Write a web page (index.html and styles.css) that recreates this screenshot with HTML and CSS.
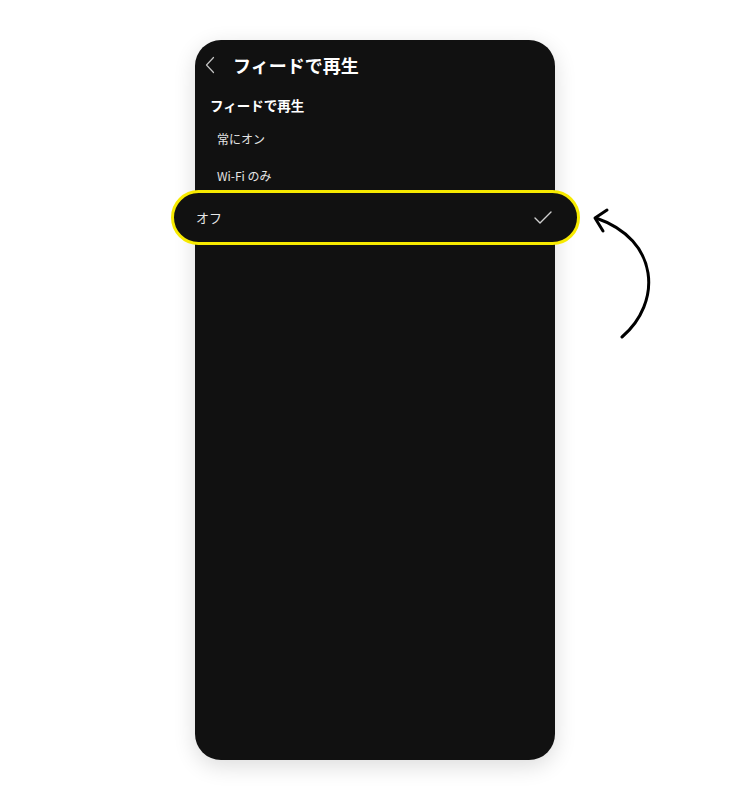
FILE: index.html
```html
<!DOCTYPE html>
<html lang="ja">
<head>
<meta charset="utf-8">
<link rel="stylesheet" href="styles.css">
</head>
<body>
<div class="stage">
  <div class="phone">
    <div class="header">
      <svg class="back" width="12" height="18" viewBox="0 0 12 18"><path d="M9.5 1.5 L2.5 9 L9.5 16.5" fill="none" stroke="#c4c4c4" stroke-width="1.2" stroke-linecap="round" stroke-linejoin="round"/></svg>
      <span class="title">フィードで再生</span>
    </div>
    <div class="section">フィードで再生</div>
    <div class="item">常にオン</div>
    <div class="item">Wi-Fi のみ</div>
    <div class="pill">
      <span class="pill-text">オフ</span>
      <svg class="check" width="18" height="13" viewBox="0 0 18 13"><path d="M1 7 L6 12 L17 1" fill="none" stroke="#cfcfcf" stroke-width="1.4" stroke-linecap="round" stroke-linejoin="round"/></svg>
    </div>
  </div>
  <svg class="arrow" width="750" height="800" viewBox="0 0 750 800">
    <path d="M622 337 C 662 303, 660 240, 596 218" fill="none" stroke="#000" stroke-width="3" stroke-linecap="round"/>
    <path d="M607 210 L595 218 L603 231" fill="none" stroke="#000" stroke-width="3" stroke-linecap="round" stroke-linejoin="round"/>
  </svg>
</div>
</body>
</html>
```
FILE: styles.css
```css
html, body {
  margin: 0;
  padding: 0;
  background: #ffffff;
}
body {
  font-family: "Noto Sans CJK JP", "Noto Sans", sans-serif;
}
.stage {
  position: relative;
  width: 750px;
  height: 800px;
  padding-top: 40px;
  box-sizing: border-box;
}
.phone {
  margin-left: 195px;
  width: 360px;
  height: 720px;
  background: #111111;
  border-radius: 26px;
  box-shadow: 0 6px 22px rgba(0, 0, 0, 0.14);
  display: flex;
  flex-direction: column;
}
.header {
  height: 50px;
  display: flex;
  align-items: center;
  padding-left: 9px;
}
.back {
  display: block;
}
.title {
  margin-left: 17px;
  color: #ffffff;
  font-size: 18px;
  font-weight: 700;
  line-height: 24px;
}
.section {
  margin-top: 5px;
  padding-left: 15px;
  color: #ffffff;
  font-size: 13.5px;
  font-weight: 700;
  line-height: 20px;
}
.section + .item {
  margin-top: 5px;
}
.item {
  padding-left: 22px;
  color: #e4e4e4;
  font-size: 12px;
  line-height: 37px;
  height: 37px;
}
.pill {
  margin: -4px -25px 0 -24px;
  height: 55px;
  box-sizing: border-box;
  border: 3.5px solid #f7ea00;
  border-radius: 28px;
  background: #111111;
  display: flex;
  align-items: center;
  justify-content: space-between;
  padding: 0 25px 0 22px;
}
.pill-text {
  color: #e8e8e8;
  font-size: 13px;
  line-height: 20px;
}
.check {
  display: block;
}
.arrow {
  position: absolute;
  left: 0;
  top: 0;
  pointer-events: none;
}
```
